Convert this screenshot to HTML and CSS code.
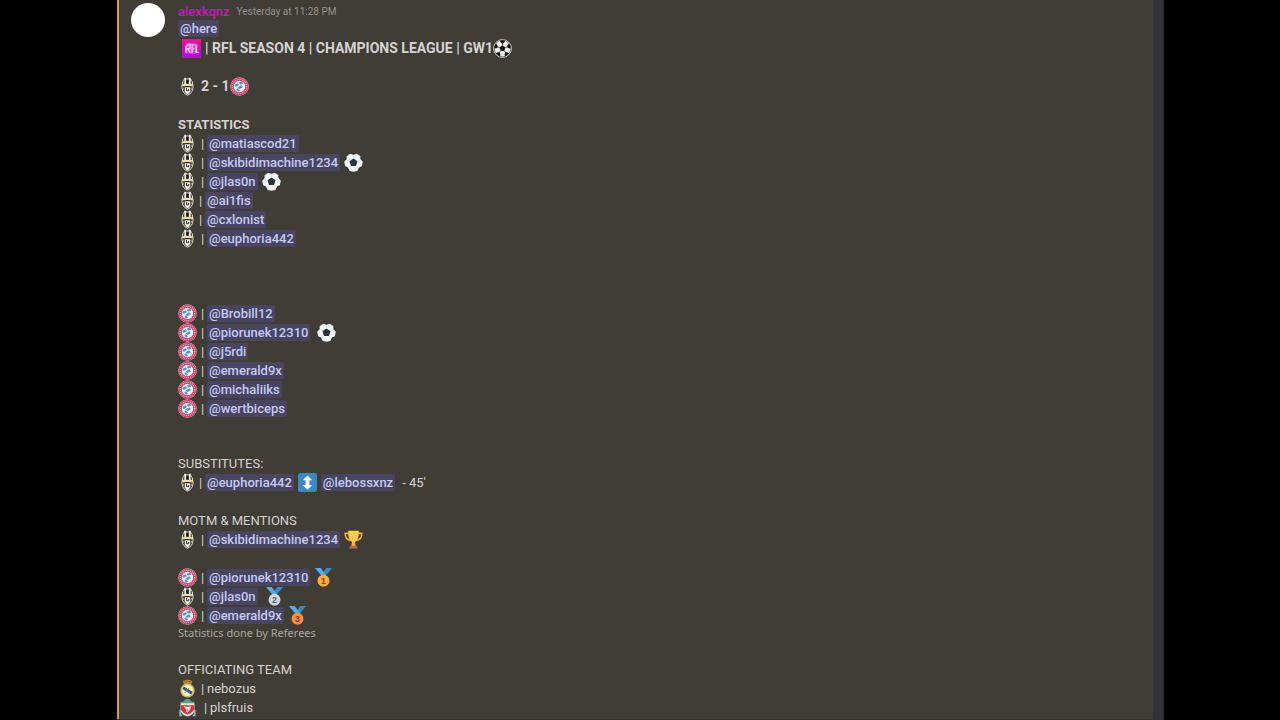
FILE: index.html
```html
<!DOCTYPE html>
<html lang="en">
<head>
  <meta charset="UTF-8">
  <title>RFL Season 4 - GW1</title>
  <meta name="viewport" content="width=device-width, initial-scale=1.0">
  <link rel="stylesheet" href="styles.css">
</head>
<body>
  <!-- emoji sprites -->
  <svg class="sprites" aria-hidden="true">
    <symbol id="rfl" viewBox="0 0 20 20">
      <defs>
        <linearGradient id="rfl-bg" x1="0" y1="0" x2="0" y2="1">
          <stop offset="0" stop-color="#ff0a8c"/>
          <stop offset="1" stop-color="#a40ff5"/>
        </linearGradient>
      </defs>
      <rect width="20" height="20" fill="url(#rfl-bg)"/>
      <rect x="3.500" y="4.500" width="13.500" height="11" rx="3" fill="#ff6fe0" opacity=".45"/>
      <g fill="none" stroke="#ffd6f8" stroke-width="1.400">
        <path d="M4 14.500V8.500L6.500 5.500H8.500V9.500L4.500 10.500M6.500 10L8.500 14.500"/>
        <path d="M10.700 15V6H13.500M10.700 10H13"/>
        <path d="M14.900 6V14H17.500"/>
      </g>
    </symbol>
    <symbol id="juve" viewBox="0 0 20 20">
      <path d="M4.800 5L6.500 1.500L13.500 1.500L15.200 5Q17.500 10 15.200 15Q13 19 10 19.700Q7 19 4.800 15Q2.500 10 4.800 5Z" fill="#d9d5c4"/>
      <path d="M5.500 5L7 2.500H13L14.500 5Q16.500 10 14.500 14.500Q12.500 18 10 18.800Q7.500 18 5.500 14.500Q3.500 10 5.500 5Z" fill="#1c1a17"/>
      <path d="M7.600 .8V9M12.400 .8V9" stroke="#f6f4ec" stroke-width="1.900"/>
      <path d="M5 5V9M15 5V9M5.300 11V14M14.700 11V14" stroke="#e6e2d3" stroke-width="1.100"/>
      <path d="M4.200 7.500Q10 6.600 15.800 7.500V10Q10 9.100 4.200 10Z" fill="#e9dcae"/>
      <path d="M7 10.800H13V15Q12 17.500 10 18.300Q8 17.500 7 15Z" fill="#f7f5f0"/>
      <path d="M9 11.500V14.500H11.200V12.500" fill="none" stroke="#25221d" stroke-width="1"/>
    </symbol>
    <symbol id="bayern" viewBox="0 0 20 20">
      <circle cx="10" cy="10" r="9.800" fill="#e3a9b9"/>
      <circle cx="10" cy="10" r="9.200" fill="#d23a63"/>
      <circle cx="10" cy="10" r="7.500" fill="none" stroke="#eab3c4" stroke-width="1.400" stroke-dasharray="1 1"/>
      <circle cx="10" cy="10" r="6" fill="#eef2fa"/>
      <path d="M4.500 8.500L8 6.500L9.500 8.500L6 10.500ZM9 6L12.500 4.500L14 7L10.800 8ZM8 10.800L12 8.800L13.500 10.800L10 12.500ZM6.500 12.500L8.500 11.800L10.500 14.500L8.500 15.500Z" fill="#4b95cf"/>
    </symbol>
    <symbol id="ball" viewBox="0 0 20 20">
      <circle cx="10" cy="10" r="9.800" fill="#2b333b"/>
      <path d="M6.500 .8L10 1.900L13.500 .8L17.300 3.300L17.200 6.300L19.800 9.300L18.800 14L15.900 15.300L14 19L10 19.800L6 19L4.100 15.300L1.200 14L.2 9.300L2.800 6.300L2.700 3.300Z" fill="#f2f4f6"/>
      <path d="M10 5.800L14.200 8.800L12.600 13.700H7.400L5.800 8.800Z" fill="#29323b"/>
      <path d="M10 6V2.500M14 9L17 7M12.500 13.500L14.500 16M7.500 13.500L5.500 16M6 9L3 7" stroke="#b9c2c9" stroke-width=".5"/>
    </symbol>
    <symbol id="classic-ball" viewBox="0 0 20 20">
      <circle cx="10" cy="10" r="9.300" fill="#ececec" stroke="#eee" stroke-width="1"/>
      <path d="M10 6.700L13.100 9L11.900 12.700H8.100L6.900 9Z" fill="#121212"/>
      <g fill="#121212">
        <path d="M7.300 1.700Q10 .9 12.700 1.700L11.700 3.900L10 4.700L8.300 3.900Z"/>
        <path d="M7.300 1.700Q10 .9 12.700 1.700L11.700 3.900L10 4.700L8.300 3.900Z" transform="rotate(72 10 10)"/>
        <path d="M7.300 1.700Q10 .9 12.700 1.700L11.700 3.900L10 4.700L8.300 3.900Z" transform="rotate(144 10 10)"/>
        <path d="M7.300 1.700Q10 .9 12.700 1.700L11.700 3.900L10 4.700L8.300 3.900Z" transform="rotate(216 10 10)"/>
        <path d="M7.300 1.700Q10 .9 12.700 1.700L11.700 3.900L10 4.700L8.300 3.900Z" transform="rotate(288 10 10)"/>
      </g>
      <path d="M10 7V4M13 9L16 8M12 12.500L14 15M8 12.500L6 15M7 9L4 8" stroke="#121212" stroke-width=".7"/>
      <circle cx="10" cy="10" r="8.800" fill="none" stroke="#222" stroke-width=".6"/>
    </symbol>
    <symbol id="swap" viewBox="0 0 20 20">
      <rect width="20" height="20" rx="2.500" fill="#3b88c3"/>
      <path d="M10 2.500L15 7.500H12V12.500H15L10 17.500L5 12.500H8V7.500H5Z" fill="#fff"/>
    </symbol>
    <symbol id="trophy" viewBox="0 0 20 20">
      <path d="M5 3.500H1.300Q1 10 7 11M15 3.500H18.700Q19 10 13 11" fill="none" stroke="#ffac33" stroke-width="1.700"/>
      <path d="M4.500 .7H15.500V5Q15 11 11.500 12.500V16H8.500V12.500Q5 11 4.500 5Z" fill="#ffcc4d"/>
      <path d="M8.500 13H11.500L12.500 17H7.500Z" fill="#ffac33"/>
      <path d="M6.500 16.500H13.500L14.500 19.500H5.500Z" fill="#c1694f"/>
    </symbol>
    <symbol id="ribbon" viewBox="0 0 20 20">
      <path d="M19 0H13L7 8L10.500 10Z" fill="#3b88c3"/>
      <path d="M1 0H7L13 8L9.500 10Z" fill="#55acee"/>
    </symbol>
    <symbol id="madrid" viewBox="0 0 20 24">
      <path d="M5 6L4 2.500L7 1.500L10 .5L13 1.500L16 2.500L15 6Z" fill="#b88d2d"/>
      <path d="M6 3L8 4L10 2L12 4L14 3" fill="none" stroke="#b34645" stroke-width="1.200"/>
      <ellipse cx="10" cy="14.500" rx="9" ry="9" fill="#d6bd51"/>
      <ellipse cx="10" cy="14.500" rx="7" ry="7" fill="#edf0dd"/>
      <path d="M3.500 12.500L5.500 9.500L16.500 16.500L14.500 19.500Z" fill="#27566f"/>
      <path d="M7 18L12 11M7.500 12L13 18" stroke="#a28a32" stroke-width="1"/>
    </symbol>
    <symbol id="liverpool" viewBox="0 0 20 22">
      <path d="M5 4Q10-2 15 4L19 5L16 7H4L1 5Z" fill="#4da78f"/>
      <path d="M2 6H18V15Q17 19 10 21.500Q3 19 2 15Z" fill="#e9e8df"/>
      <path d="M2.500 8.500H17.500V14Q15 18 10 19Q5 18 2.500 14Z" fill="#d9343e"/>
      <path d="M6 9.500L10 10.500L14 9.500L12.500 14L9.500 17.500L8.500 13.500Z" fill="#fff"/>
      <path d="M10.500 12L9.800 15" stroke="#d9343e" stroke-width="1"/>
      <path d="M1.500 14V20H4M18.500 14V20H16" fill="none" stroke="#7dbfae" stroke-width="2"/>
    </symbol>
  </svg>

  <main class="channel">
    <article class="message">
      <div class="avatar"></div>
      <div class="content">
        <header class="message-header">
          <span class="author">alexkqnz</span>
          <time class="timestamp">Yesterday at 11:28 PM</time>
        </header>

        <section class="block">
          <div class="row"><span class="mention">@here</span></div>
          <h1 class="row title">
            <svg class="emoji"><use href="#rfl"/></svg>
            <span>| RFL SEASON 4 | CHAMPIONS LEAGUE | GW1</span>
            <svg class="emoji snug"><use href="#classic-ball"/></svg>
          </h1>
        </section>

        <section class="block">
          <div class="row score">
            <svg class="emoji"><use href="#juve"/></svg>
            <span>2 - 1</span>
            <svg class="emoji snug"><use href="#bayern"/></svg>
          </div>
        </section>

        <section class="block lineup">
          <h2 class="row bold">STATISTICS</h2>
          <div class="row"><svg class="emoji"><use href="#juve"/></svg><span class="bar">|</span><span class="mention">@matiascod21</span></div>
          <div class="row"><svg class="emoji"><use href="#juve"/></svg><span class="bar">|</span><span class="mention">@skibidimachine1234</span><svg class="emoji"><use href="#ball"/></svg></div>
          <div class="row"><svg class="emoji"><use href="#juve"/></svg><span class="bar">|</span><span class="mention">@jlas0n</span><svg class="emoji"><use href="#ball"/></svg></div>
          <div class="row tight"><svg class="emoji"><use href="#juve"/></svg><span class="bar">|</span><span class="mention">@ai1fis</span></div>
          <div class="row tight"><svg class="emoji"><use href="#juve"/></svg><span class="bar">|</span><span class="mention">@cxlonist</span></div>
          <div class="row"><svg class="emoji"><use href="#juve"/></svg><span class="bar">|</span><span class="mention">@euphoria442</span></div>
        </section>

        <section class="block away">
          <div class="row"><svg class="emoji"><use href="#bayern"/></svg><span class="bar">|</span><span class="mention">@Brobill12</span></div>
          <div class="row"><svg class="emoji"><use href="#bayern"/></svg><span class="bar">|</span><span class="mention">@piorunek12310</span><svg class="emoji spaced"><use href="#ball"/></svg></div>
          <div class="row"><svg class="emoji"><use href="#bayern"/></svg><span class="bar">|</span><span class="mention">@j5rdi</span></div>
          <div class="row"><svg class="emoji"><use href="#bayern"/></svg><span class="bar">|</span><span class="mention">@emerald9x</span></div>
          <div class="row"><svg class="emoji"><use href="#bayern"/></svg><span class="bar">|</span><span class="mention">@michaliiks</span></div>
          <div class="row"><svg class="emoji"><use href="#bayern"/></svg><span class="bar">|</span><span class="mention">@wertbiceps</span></div>
        </section>

        <section class="block">
          <h2 class="row">SUBSTITUTES:</h2>
          <div class="row tight">
            <svg class="emoji"><use href="#juve"/></svg><span class="bar">|</span><span class="mention">@euphoria442</span>
            <svg class="emoji"><use href="#swap"/></svg><span class="mention">@lebossxnz</span><span class="spaced">- 45'</span>
          </div>
        </section>

        <section class="block">
          <h2 class="row">MOTM &amp; MENTIONS</h2>
          <div class="row"><svg class="emoji"><use href="#juve"/></svg><span class="bar">|</span><span class="mention">@skibidimachine1234</span><svg class="emoji"><use href="#trophy"/></svg></div>
        </section>

        <section class="block">
          <div class="row"><svg class="emoji"><use href="#bayern"/></svg><span class="bar">|</span><span class="mention">@piorunek12310</span><svg class="emoji medal gold" viewBox="0 0 20 20"><use href="#ribbon"/><circle cx="10" cy="13.500" r="6.300"/><text x="10" y="17">1</text></svg></div>
          <div class="row"><svg class="emoji"><use href="#juve"/></svg><span class="bar">|</span><span class="mention">@jlas0n</span><svg class="emoji medal silver spaced" viewBox="0 0 20 20"><use href="#ribbon"/><circle cx="10" cy="13.500" r="6.300"/><text x="10" y="17">2</text></svg></div>
          <div class="row"><svg class="emoji"><use href="#bayern"/></svg><span class="bar">|</span><span class="mention">@emerald9x</span><svg class="emoji medal bronze" viewBox="0 0 20 20"><use href="#ribbon"/><circle cx="10" cy="13.500" r="6.300"/><text x="10" y="17">3</text></svg></div>
          <small class="note">Statistics done by Referees</small>
        </section>

        <section class="block officials">
          <h2 class="row">OFFICIATING TEAM</h2>
          <div class="row"><svg class="emoji"><use href="#madrid"/></svg><span class="bar">|</span><span>nebozus</span></div>
          <div class="row wide"><svg class="emoji"><use href="#liverpool"/></svg><span class="bar">|</span><span>plsfruis</span></div>
        </section>
      </div>
    </article>
  </main>
</body>
</html>
```
FILE: styles.css
```css
* {
  box-sizing: border-box;
}
body {
  margin: 0;
  background: #000;
  color: #d5d3d0;
  font-family: Roboto, "Noto Sans", sans-serif;
  font-size: 13px;
  line-height: 19px;
}
h1, h2 {
  margin: 0;
  font-size: inherit;
  font-weight: 400;
}
.sprites {
  position: absolute;
  width: 0;
  height: 0;
}
.channel {
  min-height: 100vh;
  margin: 0 116px 0 117px;
  padding-bottom: 2px;
  background: #313338;
  border-right: 1px solid #2b2d31;
}
.message {
  display: flex;
  gap: 13px;
  margin-right: 10px;
  padding: 3px 0 2px 12px;
  background: #403c36;
  border-left: 2px solid #d99a35;
}
.avatar {
  width: 34px;
  height: 34px;
  border-radius: 50%;
  background: #fff;
}
.content {
  flex: 1;
}
.message-header {
  display: flex;
  gap: 7px;
  height: 17px;
}
.author {
  color: #c51bc0;
  font-weight: 500;
  line-height: 17px;
}
.timestamp {
  color: #96928e;
  font-size: 10px;
  line-height: 18px;
}
.block {
  margin-bottom: 19px;
}
.lineup {
  margin-bottom: 56px;
}
.away {
  margin-bottom: 36px;
}
.officials {
  margin-bottom: 0;
}
.row {
  display: flex;
  align-items: center;
  gap: 4px;
  height: 19px;
  white-space: nowrap;
}
.title, .score, .bold {
  font-weight: 700;
}
.title, .score {
  font-size: 14px;
}
.title {
  padding-left: 4px;
}
.emoji {
  flex: none;
  width: 19px;
  height: 19px;
}
.snug {
  margin-left: -4px;
}
.bar {
  width: 4px;
  margin-right: -2px;
}
.tight .bar {
  margin-left: -2px;
}
.wide .bar {
  margin-left: 3px;
}
.spaced {
  margin-left: 3px;
}
.mention {
  padding: 0 2px;
  border-radius: 2px;
  background: #484560;
  color: #c5c9f5;
  font-weight: 500;
  line-height: 17px;
}
.row > .mention:first-child {
  align-self: flex-start;
}
.medal text {
  font: bold 9px "Liberation Sans", sans-serif;
  text-anchor: middle;
}
.gold {
  fill: #ffac33;
}
.silver {
  fill: #ccd6dd;
}
.bronze {
  fill: #ff8a3b;
}
.gold text, .bronze text {
  fill: #7c3b20;
}
.silver text {
  fill: #50616c;
}
.note {
  display: block;
  color: #aaa7a3;
  font-family: "Noto Sans", sans-serif;
  font-size: 11px;
  line-height: 16px;
}
```
